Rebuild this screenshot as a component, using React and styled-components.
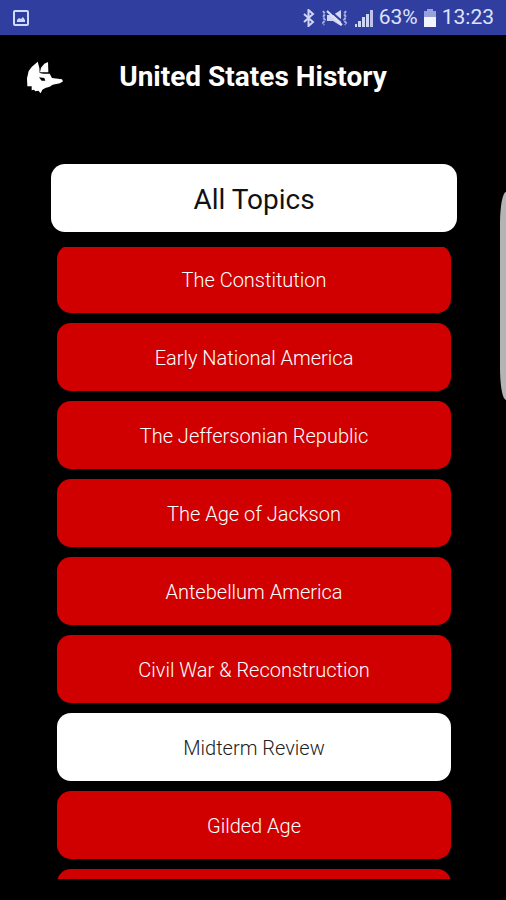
import React, { useLayoutEffect, useRef } from 'react';
import styled, { createGlobalStyle } from 'styled-components';

const topics = [
  { id: 1, name: 'The Constitution' },
  { id: 2, name: 'Early National America' },
  { id: 3, name: 'The Jeffersonian Republic' },
  { id: 4, name: 'The Age of Jackson' },
  { id: 5, name: 'Antebellum America' },
  { id: 6, name: 'Civil War & Reconstruction' },
  { id: 7, name: 'Midterm Review', review: true },
  { id: 8, name: 'Gilded Age' },
];

const PictureIcon = () => (
  <svg width="18" height="18" viewBox="0 0 18 18" fill="none">
    <rect x="2" y="2" width="14" height="14" rx="1" stroke="#cfdcff" strokeWidth="2" />
    <path d="M5 13v-2l2-2 2 1 2-2 2 3v2z" fill="#cfdcff" />
  </svg>
);

const BluetoothIcon = () => (
  <svg width="13" height="18" viewBox="0 0 13 18" fill="none">
    <path d="M2 5l9 8-4.500 4V1L11 5l-9 8" stroke="#cfd5f5" strokeWidth="2" />
  </svg>
);

const MuteIcon = () => (
  <svg width="28" height="18" viewBox="0 0 28 18" fill="none">
    <path d="M6 6h6l8-5v16l-8-5H6z" fill="#cfd5f5" />
    <path d="M8 1l15 13" stroke="#303f9f" strokeWidth="2" />
    <path d="M6 2l15 14" stroke="#dfe3fa" strokeWidth="2" />
    <path
      d="M2 2l2 3-2 3 2 3-2 3 1 2M25 2l-2 3 2 3-2 3 2 3-1 2"
      stroke="#aab4e6"
      strokeWidth="2"
      strokeDasharray="3 1"
    />
  </svg>
);

const SignalIcon = () => (
  <svg width="18" height="18" viewBox="0 0 18 18">
    <rect x="0" y="15" width="2" height="3" fill="#cfd5f5" />
    <rect x="3" y="12" width="3" height="6" fill="#cfd5f5" />
    <rect x="7" y="8" width="3" height="10" fill="#cfd5f5" />
    <rect x="11" y="5" width="3" height="13" fill="#cfd5f5" />
    <rect x="15" y="1" width="3" height="17" fill="#bcc4ee" />
  </svg>
);

const BatteryIcon = () => (
  <svg width="12" height="18" viewBox="0 0 12 18">
    <path d="M3 0h6v2h3v16H0V2h3z" fill="#97a1da" />
    <path d="M0 8h12v10H0z" fill="#f2f4ff" />
  </svg>
);

const FoxLogo = () => (
  <svg width="39" height="33" viewBox="29 28 117 99">
    <path
      d="M67 30L72 48L73 64L84 66L103 66L110 79L140 83L143 89L134 95L112 99L103 105L90 109L81 114L76 125L69 117L60 119L56 114L49 116L49 104L36 104L35 80L40 58L49 46Z"
      fill="#fff"
    />
    <path d="M98 31L99 62L74 62L77 48L87 36Z" fill="#fff" />
    <path d="M71 77L87 79L90 87L79 87Z" fill="#000" />
  </svg>
);

const App = () => {
  const listRef = useRef(null);

  // the list rests slightly scrolled under its top edge
  useLayoutEffect(() => {
    listRef.current.scrollTop = 2;
  }, []);

  return (
    <Screen>
      <GlobalStyle />
      <StatusBar>
        <PictureIcon />
        <div className="status">
          <BluetoothIcon />
          <MuteIcon />
          <SignalIcon />
          <span>63%</span>
          <BatteryIcon />
          <time>13:23</time>
        </div>
      </StatusBar>
      <Header>
        <a href="#home" aria-label="Home">
          <FoxLogo />
        </a>
        <h1>United States History</h1>
      </Header>
      <Content>
        <AllTopicsButton type="button">All Topics</AllTopicsButton>
        <TopicList ref={listRef}>
          {topics.map(({ id, name, review }) => (
            <li key={id}>
              <TopicButton type="button" $review={review}>
                {name}
              </TopicButton>
            </li>
          ))}
          <li>
            <TopicButton as="div" />
          </li>
        </TopicList>
      </Content>
      <EdgeHandle />
    </Screen>
  );
};

const GlobalStyle = createGlobalStyle`
  * {
    box-sizing: border-box;
  }
  body {
    margin: 0;
    background: #000;
    font-family: Roboto, sans-serif;
  }
`;

const Screen = styled.div`
  position: relative;
  height: 100vh;
  display: flex;
  flex-direction: column;
  overflow: hidden;
  background: #000;
`;

const StatusBar = styled.div`
  display: flex;
  align-items: center;
  justify-content: space-between;
  height: 35px;
  padding: 0 12px;
  background: #303f9f;
  color: #dfe3fa;
  font-size: 21px;
  line-height: 35px;
  .status {
    display: flex;
    align-items: center;
    gap: 6px;
  }
`;

const Header = styled.header`
  display: grid;
  grid-template-columns: 1fr auto 1fr;
  align-items: center;
  height: 84px;
  padding: 0 25px;
  a {
    display: flex;
  }
  h1 {
    margin: 0;
    color: #fff;
    font-size: 28px;
    font-weight: 700;
    line-height: 32px;
  }
`;

const Content = styled.main`
  flex: 1;
  min-height: 0;
  display: flex;
  flex-direction: column;
  gap: 15px;
  padding: 45px 49px 21px 51px;
`;

const AllTopicsButton = styled.button`
  flex-shrink: 0;
  height: 68px;
  padding: 2px 0 0;
  border: none;
  border-radius: 14px;
  background: #fff;
  color: #111;
  font-family: inherit;
  font-size: 28px;
  cursor: pointer;
`;

const TopicList = styled.ul`
  flex: 1;
  min-height: 0;
  margin: 0;
  padding: 0 6px;
  display: flex;
  flex-direction: column;
  gap: 10px;
  list-style: none;
  overflow-y: auto;
  scrollbar-width: none;
`;

const TopicButton = styled.button`
  display: block;
  width: 100%;
  height: 68px;
  padding: 2px 0 0;
  border: none;
  border-radius: 14px;
  background: ${({ $review }) => ($review ? '#fff' : '#d00000')};
  color: ${({ $review }) => ($review ? '#222' : '#fff')};
  font-family: inherit;
  font-size: 20px;
  font-weight: 300;
  cursor: pointer;
`;

const EdgeHandle = styled.div`
  position: absolute;
  top: 192px;
  right: 0;
  width: 6px;
  height: 208px;
  border-radius: 6px 0 0 6px / 32px 0 0 32px;
  background: #b4b4b4;
`;

export default App;
